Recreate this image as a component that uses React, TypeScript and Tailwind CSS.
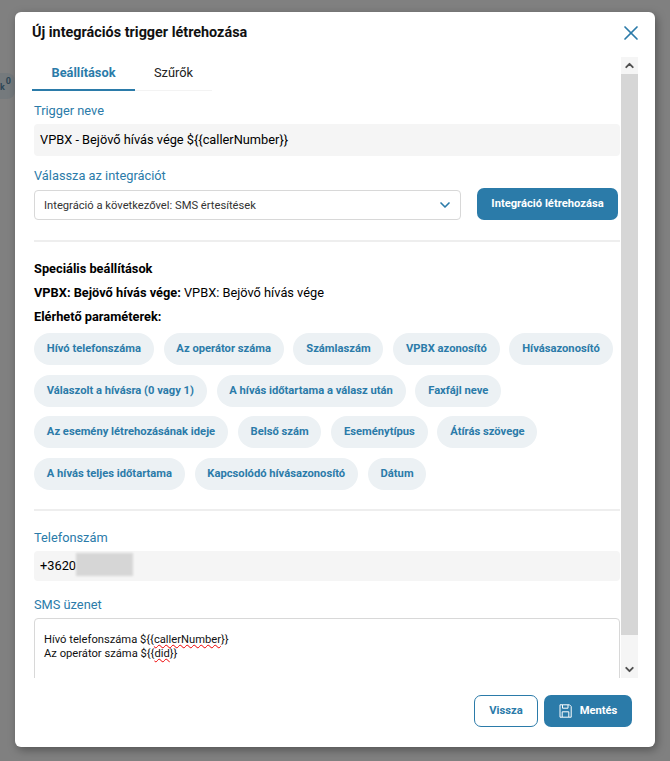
import { ChevronDown, ChevronUp, X } from 'lucide-react';

const chipRows = [
  ['Hívó telefonszáma', 'Az operátor száma', 'Számlaszám', 'VPBX azonosító', 'Hívásazonosító'],
  ['Válaszolt a hívásra (0 vagy 1)', 'A hívás időtartama a válasz után', 'Faxfájl neve'],
  ['Az esemény létrehozásának ideje', 'Belső szám', 'Eseménytípus', 'Átírás szövege'],
  ['A hívás teljes időtartama', 'Kapcsolódó hívásazonosító', 'Dátum'],
];

function Label({ children }: { children: string }) {
  return <label className="block h-[20px] pl-[2px] text-[12.8px] leading-[22px] text-[#2b7ba9]">{children}</label>;
}

function Field({ children }: { children: React.ReactNode }) {
  return (
    <div className="ml-[2px] mr-[1px] flex items-center rounded-[4px] bg-[#f5f5f5] pl-[6px] text-[12.8px] text-black">
      {children}
    </div>
  );
}

function Chip({ text }: { text: string }) {
  return (
    <span className="flex h-[32px] items-center whitespace-nowrap rounded-full bg-[#ecf1f4] px-[12.8px] pt-[1px] text-[11.2px] font-bold text-[#2b7ba9]">
      {text}
    </span>
  );
}

function Scrollbar() {
  return (
    <div className="flex w-[17px] shrink-0 flex-col bg-[#f5f5f5]">
      <div className="flex h-[17px] items-center justify-center text-[#505050]">
        <ChevronUp size={13} strokeWidth={3.5} />
      </div>
      <div className="h-[561px] bg-[#d6d6d6]" />
      <div className="mt-auto flex h-[17px] items-center justify-center text-[#505050]">
        <ChevronDown size={13} strokeWidth={3.5} />
      </div>
    </div>
  );
}

function SaveIcon() {
  return (
    <svg width="13" height="14" viewBox="0 0 13 14" fill="none" stroke="currentColor" strokeWidth="1">
      <path d="M1 .8h9.5l1.7 1.7v10.7H1z" />
      <path d="M3.5 1v3.2h5.5V1" />
      <path d="M3.2 13V7.8h6.6V13" />
    </svg>
  );
}

export default function App() {
  return (
    <div className="relative h-[761px] w-[670px] overflow-hidden bg-[#808080] pl-[15px] pt-[12px] font-['Roboto',sans-serif]">
      {/* page behind the overlay */}
      <div className="absolute left-[-10px] top-[73px] flex h-[26px] w-[25px] items-start justify-end gap-[1px] rounded-[8px] bg-[#757a7d] pr-[4px] pt-[2px] text-[9px] font-bold text-[#2d4656]">
        <span className="mt-[6px]">k</span>
        <span>0</span>
      </div>

      <div className="relative flex h-[735px] w-[640px] flex-col rounded-[6px] bg-white shadow-[2px_3px_10px_rgba(0,0,0,0.35)]">
        <div className="flex h-[45px] shrink-0 items-center justify-between pb-[3px] pl-[17px] pr-[12px]">
          <h2 className="text-[14.4px] font-bold leading-none text-[#111]">Új integrációs trigger létrehozása</h2>
          <X size={24} strokeWidth={1.7} className="text-[#2b7ba9]" />
        </div>

        <div className="ml-[17px] mr-[17px] flex h-[621px] shrink-0 overflow-hidden">
          <div className="w-[589px] shrink-0">
            <div className="flex h-[34px] w-[180px] border-b-[1px] border-[#f3f3f3]">
              <div className="-mb-[1px] flex h-[34px] w-[103px] items-center justify-center border-b-[2px] border-[#2b7ba9] text-[12.8px] font-bold text-[#2b7ba9]">
                Beállítások
              </div>
              <div className="flex w-[77px] items-center justify-center pb-[1px] text-[12.8px] text-[#222]">Szűrők</div>
            </div>

            <div className="mt-[9px]">
              <Label>Trigger neve</Label>
              <div className="mt-[4px] h-[32px]">
                <Field>
                  <span className="flex h-[32px] items-center">{'VPBX - Bejövő hívás vége ${{callerNumber}}'}</span>
                </Field>
              </div>
            </div>

            <div className="mt-[9px]">
              <Label>Válassza az integrációt</Label>
              <div className="mt-[3px] flex items-end pl-[2px]">
                <div className="flex h-[30px] w-[427px] items-center justify-between rounded-[4px] border border-[#d8d8d8] pl-[9px] pr-[7px] text-[11.2px] text-[#333]">
                  <span className="pt-[2px]">Integráció a következővel: SMS értesítések</span>
                  <ChevronDown size={16} strokeWidth={2.5} className="text-[#2b7ba9]" />
                </div>
                <button className="ml-[16px] h-[32px] w-[141px] rounded-[7px] bg-[#2b7ba9] text-[11.2px] font-bold text-white">
                  Integráció létrehozása
                </button>
              </div>
            </div>

            <div className="ml-[2px] mr-[1px] mt-[20px] h-[2px] bg-[#eeeeee]" />

            <div className="pl-[2px] text-[12.8px] text-black">
              <p className="mt-[19px] h-[16px] font-bold leading-[16px]">Speciális beállítások</p>
              <p className="mt-[8px] h-[16px] leading-[16px]">
                <b>VPBX: Bejövő hívás vége:</b> VPBX: Bejövő hívás vége
              </p>
              <p className="mt-[8px] h-[16px] font-bold leading-[16px]">Elérhető paraméterek:</p>
            </div>

            <div className="ml-[2px] mt-[8px] flex flex-col gap-[9.7px]">
              {chipRows.map((row) => (
                <div key={row[0]} className="flex gap-[9.8px]">
                  {row.map((text) => (
                    <Chip key={text} text={text} />
                  ))}
                </div>
              ))}
            </div>

            <div className="ml-[2px] mr-[1px] mt-[19px] h-[2px] bg-[#eeeeee]" />

            <div className="mt-[16px]">
              <Label>Telefonszám</Label>
              <div className="mt-[4px]">
                <Field>
                  <span className="flex h-[30px] items-center">
                    +3620
                    <span className="mb-[3px] h-[23px] w-[57px] bg-[#d6d6d6] blur-[1px]" />
                  </span>
                </Field>
              </div>
            </div>

            <div className="mt-[13px]">
              <Label>SMS üzenet</Label>
              <div className="ml-[2px] mr-[1px] mt-[4px] h-[80px] rounded-[4px] border border-[#d8d8d8] px-[9px] pt-[14px] text-[11.2px] leading-[14px] text-[#111]">
                <p>
                  {'Hívó telefonszáma ${{'}
                  <span className="underline decoration-[#ee0000] decoration-wavy decoration-1">callerNumber</span>
                  {'}}'}
                </p>
                <p>
                  {'Az operátor száma ${{'}
                  <span className="underline decoration-[#ee0000] decoration-wavy decoration-1">did</span>
                  {'}}'}
                </p>
              </div>
            </div>
          </div>
          <Scrollbar />
        </div>

        <div className="flex flex-1 items-start justify-end gap-[6px] pr-[23px] pt-[17px]">
          <button className="h-[32px] w-[64px] rounded-[7px] border border-[#2b7ba9] text-[11.2px] font-bold text-[#2b7ba9]">
            Vissza
          </button>
          <button className="flex h-[32px] w-[88px] items-center justify-center gap-[8px] rounded-[7px] bg-[#2b7ba9] text-[11.2px] font-bold text-white">
            <SaveIcon />
            Mentés
          </button>
        </div>
      </div>
    </div>
  );
}
